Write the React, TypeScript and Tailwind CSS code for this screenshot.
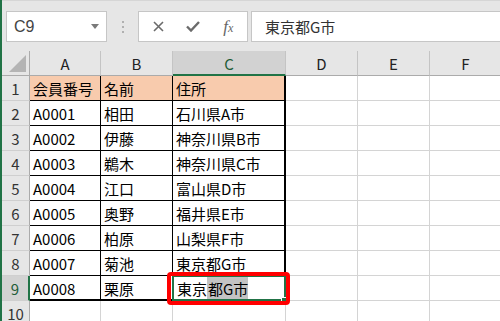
import React from "react";

// Excel-style sheet: formula bar + A..F columns, rows 1..10

const FONT = "font-['Noto_Sans_CJK_JP','Noto_Sans',sans-serif]";

const COLS = [
  { id: "A", w: "w-[71px]" },
  { id: "B", w: "w-[72px]" },
  { id: "C", w: "w-[113px]" },
  { id: "D", w: "w-[72px]" },
  { id: "E", w: "w-[72px]" },
  { id: "F", w: "w-[72px]" },
];

const DATA: string[][] = [
  ["会員番号", "名前", "住所"],
  ["A0001", "相田", "石川県A市"],
  ["A0002", "伊藤", "神奈川県B市"],
  ["A0003", "鵜木", "神奈川県C市"],
  ["A0004", "江口", "富山県D市"],
  ["A0005", "奥野", "福井県E市"],
  ["A0006", "柏原", "山梨県F市"],
  ["A0007", "菊池", "東京都G市"],
  ["A0008", "栗原", "東京都G市"],
];

function FormulaBar() {
  return (
    <div className="h-[51px] shrink-0 bg-[#e6e6e6] border-t border-[#d6d6d6] flex items-start pt-[10px]">
      {/* name box */}
      <div className="ml-[4px] w-[101px] h-[31px] bg-white border border-[#c6c6c6] flex items-center pl-[7px] pr-[7px]">
        <span className="text-[16px] leading-none text-[#444] font-['Liberation_Sans',sans-serif]">C9</span>
        <svg className="ml-auto" width="8" height="5" viewBox="0 0 8 5">
          <polygon points="0,0 8,0 4,5" fill="#7a7a7a" />
        </svg>
      </div>

      {/* grip dots */}
      <div className="w-[31px] h-[31px] flex flex-col items-center justify-center gap-[3px]">
        <div className="w-[2px] h-[2px] bg-[#b0b0b0]" />
        <div className="w-[2px] h-[2px] bg-[#b0b0b0]" />
        <div className="w-[2px] h-[2px] bg-[#b0b0b0]" />
      </div>

      {/* cancel / enter / fx */}
      <div className="w-[110px] h-[31px] bg-white border border-[#c6c6c6] flex items-center">
        <div className="w-[38px] flex justify-center pl-[1px]">
          <svg width="11" height="11" viewBox="0 0 11 11">
            <path d="M1 1 L10 10 M10 1 L1 10" stroke="#6b6b6b" strokeWidth="1.6" fill="none" />
          </svg>
        </div>
        <div className="w-[34px] flex justify-center">
          <svg width="14" height="11" viewBox="0 0 14 11">
            <path d="M1 5.5 L5 9.5 L13 1" stroke="#6b6b6b" strokeWidth="2.4" fill="none" />
          </svg>
        </div>
        <div className="w-[38px] flex justify-center">
          <span className="italic text-[17px] leading-none text-[#666] font-['Liberation_Serif',serif]">
            f<span className="text-[12px]">x</span>
          </span>
        </div>
      </div>

      {/* formula input */}
      <div className="ml-[3px] flex-1 h-[31px] bg-white border border-r-0 border-[#c6c6c6] flex items-center pl-[13px]">
        <span className={`text-[15px] leading-none text-[#333] ${FONT}`}>東京都G市</span>
      </div>
    </div>
  );
}

function HeaderRow() {
  return (
    <div className="flex h-[25px] shrink-0 bg-[#e6e6e6]">
      <div className="w-[28px] shrink-0 border-r border-b border-[#ababab] relative">
        <svg className="absolute right-[3px] bottom-[3px]" width="17" height="17" viewBox="0 0 17 17">
          <polygon points="17,0 17,17 0,17" fill="#b4b4b4" />
        </svg>
      </div>
      {COLS.map((c) => {
        const sel = c.id === "C";
        return (
          <div
            key={c.id}
            className={`${c.w} shrink-0 flex items-center justify-center pt-[1px] border-r border-[#c4c4c4] ${
              sel ? "bg-[#d2d2d2] border-b-2 border-b-[#217346] text-[#1f5c38]" : "border-b border-b-[#ababab] text-[#222]"
            }`}
          >
            <span className="text-[15px] leading-none">{c.id}</span>
          </div>
        );
      })}
    </div>
  );
}

function DataRow({ n, cells }: { n: number; cells: string[] }) {
  const isTable = n <= 9;
  const selRow = n === 9;
  return (
    <div className="flex h-[25px] shrink-0">
      <div
        className={`w-[28px] shrink-0 flex items-center justify-center pt-[1px] border-b border-[#cfcfcf] ${
          selRow
            ? "bg-[#d2d2d2] border-r-2 border-r-[#217346] text-[#1f5c38]"
            : "bg-[#e6e6e6] border-r border-r-[#ababab] text-[#333]"
        }`}
      >
        <span className="text-[15px] leading-none">{n}</span>
      </div>
      {COLS.map((c, i) => {
        const inTable = isTable && i < 3;
        const right = inTable
          ? i === 2
            ? "border-r-2 border-r-black"
            : "border-r border-r-black"
          : "border-r border-r-[#d4d4d4]";
        const bottom = inTable
          ? n === 9
            ? "border-b-2 border-b-black"
            : "border-b border-b-black"
          : "border-b border-b-[#d4d4d4]";
        const fill = inTable && n === 1 ? "bg-[#f8cbad]" : "bg-white";
        const text = cells[i] ?? "";
        const isSel = n === 9 && c.id === "C";
        return (
          <div key={c.id} className={`${c.w} shrink-0 ${right} ${bottom} ${fill} ${isSel ? "relative z-10" : ""}`}>
            {isSel ? (
              <>
                <div className="flex h-full pl-[4px] pt-[1px] text-[15px] leading-none text-black">
                  <span className="flex items-center pt-[1px]">東京</span>
                  <span className="flex items-center pt-[1px] bg-[#c3c3c3] pl-[1px]">都G市</span>
                </div>
                <div className="absolute -left-[1px] -top-[1px] -right-[2px] -bottom-[2px] border-2 border-[#217346]" />
                <div className="absolute -right-[3px] -bottom-[4px] w-[6px] h-[6px] bg-[#217346] border-l border-t border-white" />
                <div className="absolute -left-[6px] -top-[4px] -right-[6px] -bottom-[6px] border-[4px] border-[#ff0000] rounded-[4px]" />
              </>
            ) : (
              <div className="flex items-center h-full pl-[3px] pt-[1px] text-[15px] leading-none text-black">{text}</div>
            )}
          </div>
        );
      })}
    </div>
  );
}

export default function App() {
  return (
    <div className={`w-[500px] h-[321px] overflow-hidden flex bg-white ${FONT}`}>
      <div className="w-[2px] shrink-0 bg-[#217346]" />
      <div className="flex-1 flex flex-col overflow-hidden">
        <FormulaBar />
        <HeaderRow />
        {DATA.map((cells, i) => (
          <DataRow key={i} n={i + 1} cells={cells} />
        ))}
        <DataRow n={10} cells={[]} />
      </div>
    </div>
  );
}
